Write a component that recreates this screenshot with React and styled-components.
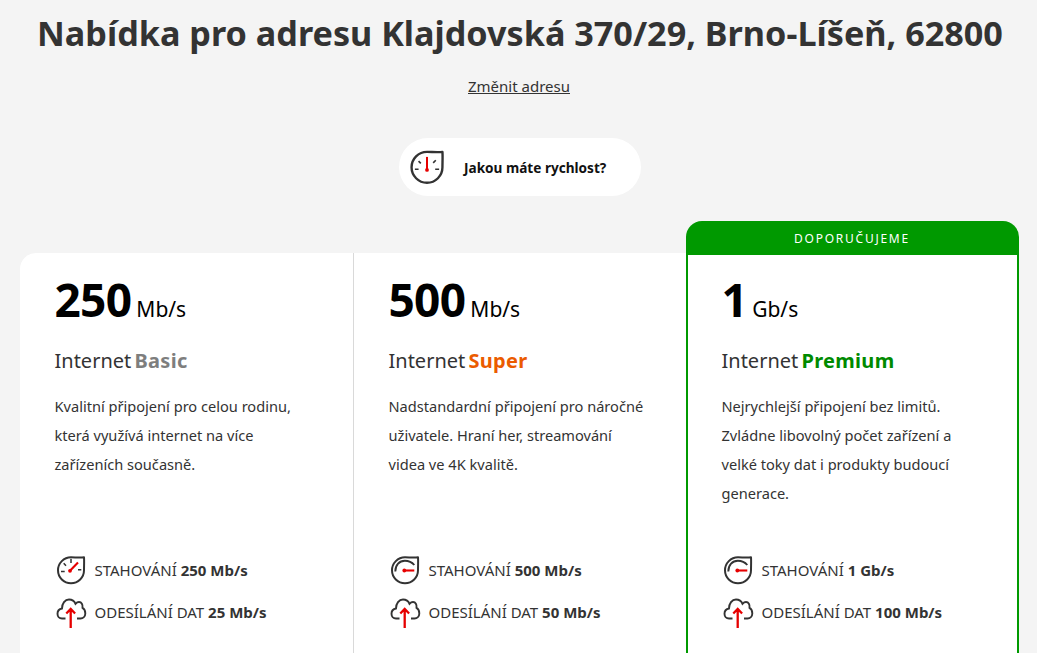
import React from "react";
import styled, { createGlobalStyle } from "styled-components";

const Global = createGlobalStyle`
  html, body { margin: 0; padding: 0; height: 653px; overflow: hidden; background: #f4f4f4; }
  body { font-family: "Noto Sans", "Open Sans", sans-serif; color: #333; }
`;
const Page = styled.div`
  height: 653px; overflow: hidden; display: flex; flex-direction: column; align-items: center;
  padding-left: 1px; box-sizing: border-box;
  & > * { flex: none; }
`;
const Title = styled.h1`
  margin: 8px 0 0 2px; font-size: 34.2px; line-height: 50px; font-weight: 700; color: #333; white-space: nowrap;
`;
const ChangeLink = styled.a`
  margin-top: 17px; font-size: 15px; line-height: 22px; color: #333; text-decoration: underline;
`;
const SpeedPill = styled.div`
  margin: 41px 0 0 2px; width: 242px; height: 58px; border-radius: 29px; background: #fff;
  display: flex; align-items: center; gap: 18px; padding-left: 9px; box-sizing: border-box;
  font-size: 13.6px; font-weight: 700; color: #111;
`;
const Cards = styled.div`
  margin-top: 25px; width: 999px; display: grid; grid-template-columns: 334px 332px 333px; align-items: start;
`;
const Card = styled.div`
  background: #fff; height: 420px; margin-top: 32px; box-sizing: border-box; padding: 17px 20px 0 35px;
  border-right: ${p => p.$divider ? "1px solid #d9d9d9" : "none"};
  border-top-left-radius: ${p => p.$first ? "16px" : 0};
  display: flex; flex-direction: column;
`;
const Featured = styled.div`
  height: 452px; border-radius: 16px 16px 0 0; background: #009900; box-sizing: border-box; padding: 0 2px;
  display: flex; flex-direction: column;
`;
const Badge = styled.div`
  height: 34px; display: flex; align-items: center; justify-content: center;
  color: #fff; font-size: 12px; letter-spacing: 1.75px; font-weight: 400;
`;
const FeaturedBody = styled.div`
  flex: 1; background: #fff; padding: 15px 20px 0 34px; display: flex; flex-direction: column;
`;
const Speed = styled.div`
  height: 58px; display: flex; align-items: baseline; gap: 5px; color: #000;
`;
const Num = styled.span`
  font-size: 46px; line-height: 58px; font-weight: 700; letter-spacing: -0.7px;
`;
const Unit = styled.span`
  font-size: 21px; font-weight: 400;
`;
const Name = styled.div`
  margin-top: 18px; font-size: 20px; line-height: 30px; color: #333; word-spacing: -2px;
  b { font-weight: 700; letter-spacing: 0.3px; color: ${p => p.$color}; }
`;
const Desc = styled.p`
  margin: 16px 0 0; height: 116px; font-size: 14.6px; line-height: 29px; color: #333; white-space: nowrap;
`;
const Features = styled.div`
  margin-top: 47px; display: flex; flex-direction: column; gap: 12px;
`;
const Feature = styled.div`
  height: 30px; display: flex; align-items: center; gap: 8px; font-size: 15px; color: #333; white-space: nowrap;
  b { font-weight: 700; }
`;

const Gauge = ({ size = 32, needle }) => (
  <svg width={size} height={size} viewBox="0 0 32 32" fill="none" style={{ flex: "none" }}>
    <path d="M16 3.300C20 3.300 25 3.800 29 3.300C29.300 7 29 12 29 16.300A13 13 0 1 1 16 3.300Z" stroke="#333" strokeWidth="2" strokeLinejoin="round" />
    {needle === "up" && <>
      <path d="M8.900 11.100L10.800 13M23.400 10.300L21.200 12.500M5.800 17.900H8.900M22.900 17.900H26.200" stroke="#333" strokeWidth="1.400" />
      <path d="M16 7.500V18.500" stroke="#e60000" strokeWidth="1.700" />
      <circle cx="16" cy="18.500" r="1.600" fill="#e60000" />
    </>}
    {needle === "diag" && <>
      <path d="M16 4.800V9M8.700 9.200L11 11.800M6 17.500H9.700M23 15.800H26.300" stroke="#333" strokeWidth="1.500" />
      <path d="M15 16.800L23 8.500" stroke="#e60000" strokeWidth="2.100" />
      <circle cx="15" cy="16.800" r="1.900" fill="#e60000" />
    </>}
    {needle === "right" && <>
      <path d="M6.300 17.500C6.300 11 10.500 6.800 15.800 6.800C19.500 6.800 23 8.300 25.300 11" stroke="#333" strokeWidth="1.900" />
      <path d="M15.300 16.500H25.300" stroke="#e60000" strokeWidth="2.100" />
      <circle cx="15.300" cy="16.500" r="1.900" fill="#e60000" />
    </>}
  </svg>
);
const Cloud = () => (
  <svg width="32" height="32" viewBox="0 0 32 32" fill="none" style={{ flex: "none" }}>
    <path d="M10.500 22.500H7C4.200 22.500 2.500 20.300 2.500 17.700C2.500 15 4.300 13 7 12.500C7 7.500 10 3.500 14 3.500C17 3.500 19.500 5.300 20.500 7.800C21.500 6.700 22.800 6 24 6C26.500 6 28 8.500 27.500 11.800C29.300 12.800 30.300 15 30.300 17.500C30.300 20.500 28 22.500 25.500 22.500H22" stroke="#333" strokeWidth="1.900" />
    <path d="M15.700 32V13M11.300 17.500L15.700 13L20.100 17.500" stroke="#e60000" strokeWidth="2.300" />
  </svg>
);

const Content = ({ num, unit, plan, color, desc, down, up, needle }) => (
  <>
    <Speed><Num>{num}</Num><Unit>{unit}</Unit></Speed>
    <Name $color={color}>Internet <b>{plan}</b></Name>
    <Desc>{desc}</Desc>
    <Features>
      <Feature><Gauge needle={needle} /><span>STAHOVÁNÍ <b>{down}</b></span></Feature>
      <Feature><Cloud /><span>ODESÍLÁNÍ DAT <b>{up}</b></span></Feature>
    </Features>
  </>
);

export default function App() {
  return (
    <Page>
      <Global />
      <Title>Nabídka pro adresu Klajdovská 370/29, Brno-Líšeň, 62800</Title>
      <ChangeLink href="#">Změnit adresu</ChangeLink>
      <SpeedPill><Gauge size={38} needle="up" /><span>Jakou máte rychlost?</span></SpeedPill>
      <Cards>
        <Card $first $divider>
          <Content num="250" unit="Mb/s" plan="Basic" color="#7e7e7e" needle="diag"
            desc={<>Kvalitní připojení pro celou rodinu,<br />která využívá internet na více<br />zařízeních současně.</>}
            down="250 Mb/s" up="25 Mb/s" />
        </Card>
        <Card>
          <Content num="500" unit="Mb/s" plan="Super" color="#eb5b00" needle="right"
            desc={<>Nadstandardní připojení pro náročné<br />uživatele. Hraní her, streamování<br />videa ve 4K kvalitě.</>}
            down="500 Mb/s" up="50 Mb/s" />
        </Card>
        <Featured>
          <Badge>DOPORUČUJEME</Badge>
          <FeaturedBody>
            <Content num="1" unit="Gb/s" plan="Premium" color="#008a00" needle="right"
              desc={<>Nejrychlejší připojení bez limitů.<br />Zvládne libovolný počet zařízení a<br />velké toky dat i produkty budoucí<br />generace.</>}
              down="1 Gb/s" up="100 Mb/s" />
          </FeaturedBody>
        </Featured>
      </Cards>
    </Page>
  );
}
